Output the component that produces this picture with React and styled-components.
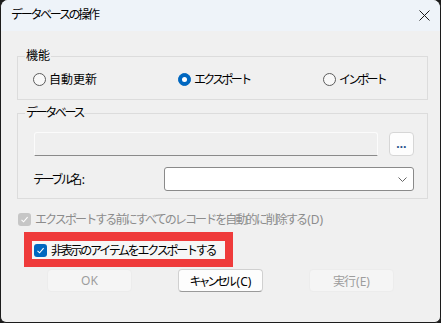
import React from "react";
import styled, { createGlobalStyle } from "styled-components";

const GlobalStyle = createGlobalStyle`
  html, body {
    margin: 0;
    padding: 0;
    background: #1c1c1c;
  }
  body {
    font-family: "Noto Sans", "Noto Sans CJK JP", sans-serif;
    font-size: 12px;
    letter-spacing: -1.7px;
    color: #000;
  }
`;

const Window = styled.div`
  box-sizing: border-box;
  width: 441px;
  height: 323px;
  background: #f0f0f0;
  border: 1px solid #1c1c1c;
  border-top: none;
  border-radius: 8px 8px 6px 6px;
  overflow: hidden;
  display: flex;
  flex-direction: column;
`;

const TitleBar = styled.div`
  height: 31px;
  flex: none;
  background: #eef3f9;
  display: flex;
  align-items: center;
  justify-content: space-between;
  padding: 0 10px;
`;

const Title = styled.span`
  font-size: 12px;
  line-height: 16px;
  margin-top: -1px;
  letter-spacing: -2.3px;
`;

const Latin = styled.span`
  letter-spacing: 0;
  margin-left: ${(p) => p.$gap || 0}px;
`;

const Body = styled.div`
  display: flex;
  flex-direction: column;
  padding: 17px 12px 0 16px;
`;

const Group = styled.fieldset`
  margin: ${(p) => p.$top || 0}px 0 0;
  padding: ${(p) => p.$pad};
  border: 1px solid #dcdcdc;
  min-width: 0;
`;

const Legend = styled.legend`
  padding: 0 1px;
  margin-left: -8px;
  line-height: 16px;
  font-size: 12px;
  letter-spacing: ${(p) => p.$ls || "-1.7px"};
`;

const RadioRow = styled.div`
  display: grid;
  grid-template-columns: 145px 145px 1fr;
  height: 20px;
  align-items: center;
`;

const Option = styled.label`
  display: flex;
  align-items: center;
  gap: 3px;
  white-space: nowrap;
  letter-spacing: ${(p) => p.$ls || "-1.7px"};
  color: ${(p) => (p.$disabled ? "#8c8c8c" : "#000")};
`;

const RadioDot = styled.span`
  box-sizing: border-box;
  width: 13px;
  height: 13px;
  border-radius: 50%;
  flex: none;
  display: flex;
  align-items: center;
  justify-content: center;
  border: 1px solid ${(p) => (p.$on ? "#0067c0" : "#5c5c5c")};
  background: ${(p) => (p.$on ? "#0067c0" : "#f8f8f8")};
  &::after {
    content: "";
    display: ${(p) => (p.$on ? "block" : "none")};
    width: 5px;
    height: 5px;
    border-radius: 50%;
    background: #fff;
  }
`;

const FieldRow = styled.div`
  display: flex;
  align-items: center;
  height: 24px;
  margin-top: ${(p) => p.$top || 0}px;
`;

const PathBox = styled.div`
  box-sizing: border-box;
  flex: 1;
  height: 24px;
  margin-left: 1px;
  background: #efefef;
  border: 1px solid #fbfbfb;
  border-bottom: 1px solid #8a8a8a;
  border-radius: 3px 3px 0 0;
`;

const BrowseButton = styled.button`
  box-sizing: border-box;
  width: 25px;
  height: 24px;
  margin-left: 11px;
  padding: 0;
  background: #fdfdfd;
  border: 1px solid #d6d6d6;
  border-radius: 4px;
  color: #1f4f8a;
  font-family: inherit;
  font-size: 12px;
  font-weight: bold;
  letter-spacing: 0;
  line-height: 1;
`;

const FieldLabel = styled.span`
  width: 131px;
  flex: none;
  letter-spacing: -2.5px;
`;

const Combo = styled.div`
  box-sizing: border-box;
  flex: 1;
  height: 24px;
  background: #fff;
  border: 1px solid #8a8a8a;
  border-radius: 3px;
  display: flex;
  align-items: center;
  justify-content: flex-end;
  padding-right: 6px;
`;

const CheckRow = styled.div`
  display: flex;
  height: 16px;
  align-items: center;
  padding-left: 1px;
  margin-top: 12px;
`;

const Box = styled.span`
  box-sizing: border-box;
  width: 13px;
  height: 13px;
  margin-right: 1px;
  border-radius: 3px;
  flex: none;
  display: flex;
  align-items: center;
  justify-content: center;
  background: ${(p) => (p.$disabled ? "#c6c6c6" : "#0067c0")};
`;

const Highlight = styled.div`
  align-self: flex-start;
  margin: 5px 0 0 7px;
  border: 8px solid #ef3b3b;
  border-top-width: 9px;
  width: 191px;
  height: 18px;
  background: #f6f6f6;
  display: flex;
  align-items: center;
  padding-left: 2px;
`;

const ButtonRow = styled.div`
  display: flex;
  gap: 46px;
  padding-left: 30px;
  margin-top: 2px;
`;

const Button = styled.button`
  box-sizing: border-box;
  width: 85px;
  height: 23px;
  padding: 0;
  border-radius: 4px;
  font-family: inherit;
  font-size: 12px;
  letter-spacing: ${(p) => p.$ls || "0"};
  background: ${(p) => (p.disabled ? "#f5f5f5" : "#fdfdfd")};
  color: ${(p) => (p.disabled ? "#9d9d9d" : "#000")};
  border: 1px solid ${(p) => (p.disabled ? "#ececec" : "#d0d0d0")};
  border-bottom-color: ${(p) => (p.disabled ? "#ececec" : "#9a9a9a")};
`;

const Check = () => (
  <svg width="9" height="9" viewBox="0 0 9 9">
    <path d="M1.5 4.8 L3.6 6.8 L7.6 2.2" fill="none" stroke="#fff" strokeWidth="1.1" />
  </svg>
);

export default function App() {
  return (
    <>
      <GlobalStyle />
      <Window>
        <TitleBar>
          <Title>データベースの操作</Title>
          <svg width="11" height="11" viewBox="0 0 11 11">
            <path d="M0.5 0.5 L10.5 10.5 M10.5 0.5 L0.5 10.5" stroke="#1a1a1a" strokeWidth="1" />
          </svg>
        </TitleBar>
        <Body>
          <Group $pad="5px 15px 10px">
            <Legend $ls="0">機能</Legend>
            <RadioRow>
              <Option $ls="0">
                <RadioDot />
                自動更新
              </Option>
              <Option $ls="-2.7px">
                <RadioDot $on />
                エクスポート
              </Option>
              <Option $ls="-2.8px">
                <RadioDot />
                インポート
              </Option>
            </RadioRow>
          </Group>
          <Group $top={5} $pad="11px 13px 7px 15px">
            <Legend $ls="-2.4px">データベース</Legend>
            <FieldRow>
              <PathBox />
              <BrowseButton>…</BrowseButton>
            </FieldRow>
            <FieldRow $top={11}>
              <FieldLabel>
                テーブル名<Latin $gap={2}>:</Latin>
              </FieldLabel>
              <Combo>
                <svg width="9" height="5" viewBox="0 0 9 5">
                  <path d="M0.5 0.5 L4.5 4.5 L8.5 0.5" fill="none" stroke="#666" strokeWidth="1" />
                </svg>
              </Combo>
            </FieldRow>
          </Group>
          <CheckRow>
            <Option $disabled $ls="-1.9px">
              <Box $disabled>
                <Check />
              </Box>
              <span>
                エクスポートする前にすべてのレコードを自動的に削除する<Latin $gap={1}>(D)</Latin>
              </span>
            </Option>
          </CheckRow>
          <Highlight>
            <Option $ls="-2.25px">
              <Box>
                <Check />
              </Box>
              非表示のアイテムをエクスポートする
            </Option>
          </Highlight>
          <ButtonRow>
            <Button disabled>OK</Button>
            <Button $ls="-3.2px">
              キャンセル<Latin $gap={3}>(C)</Latin>
            </Button>
            <Button disabled $ls="-1px">
              実行<Latin $gap={1}>(E)</Latin>
            </Button>
          </ButtonRow>
        </Body>
      </Window>
    </>
  );
}
